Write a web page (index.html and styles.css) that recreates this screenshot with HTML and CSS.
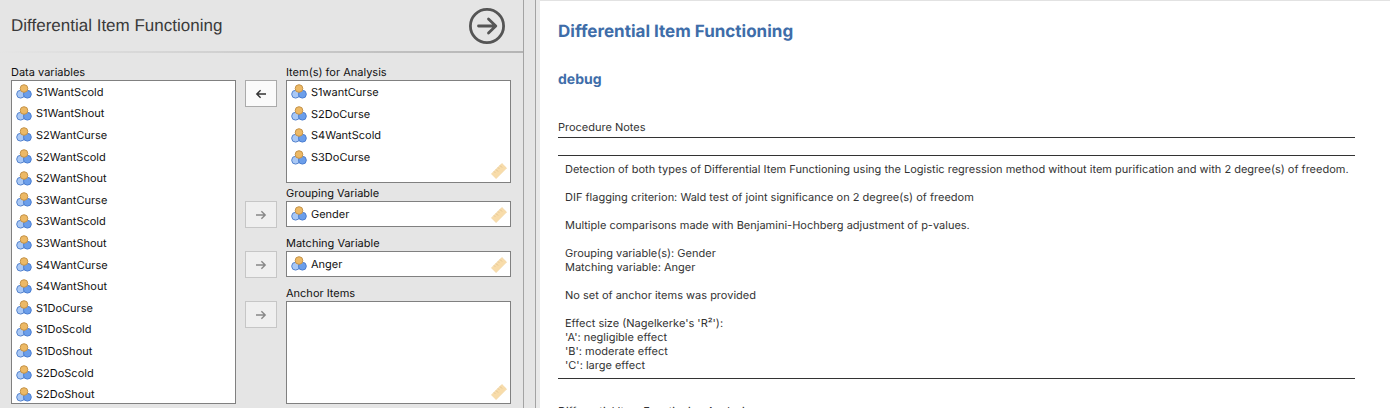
FILE: index.html
```html
<!DOCTYPE html>
<html lang="en">
<head>
<meta charset="utf-8">
<title>Differential Item Functioning</title>
<link rel="stylesheet" href="styles.css">
</head>
<body>
<svg class="defs" aria-hidden="true">
  <symbol id="nominal" viewBox="0 0 16 15">
    <circle cx="4.6" cy="10.2" r="3.9" fill="#a9c8f5" stroke="#5583cd"/>
    <circle cx="11.4" cy="10.2" r="3.9" fill="#6b9eea" stroke="#4d7fd0"/>
    <circle cx="8" cy="4.5" r="3.8" fill="#edb965" stroke="#c4934a"/>
  </symbol>
  <symbol id="ruler" viewBox="0 0 16 16">
    <path d="M10.9.5 15.5 5.1 5.1 15.5.5 10.9Z" fill="#f8dcaa" stroke="#f3d7a6" stroke-width=".8"/>
    <path d="m3 8.5 1.2 1.2M5 6.5l2 2M7 4.5l1.2 1.2M9 2.5l2 2" fill="none" stroke="#dfc08d" stroke-width=".9"/>
  </symbol>
  <symbol id="arrow-right" viewBox="0 0 12 10">
    <path d="M1 5h9M6.4 1.2 10.2 5 6.4 8.8" fill="none" stroke="currentColor" stroke-width="1.4"/>
  </symbol>
  <symbol id="arrow-left" viewBox="0 0 12 10">
    <path d="M11 5H2M5.6 1.2 1.8 5l3.8 3.8" fill="none" stroke="currentColor" stroke-width="1.4"/>
  </symbol>
</svg>
<div class="app">
  <section class="options">
    <header class="options-head">
      <h1 class="options-title">Differential Item Functioning</h1>
      <button class="run" type="button" aria-label="Hide options">
        <svg class="run-icon" viewBox="0 0 36 36"><circle cx="18" cy="18" r="16.6" fill="none" stroke="#555" stroke-width="2.8"/><path d="M9.5 18h17M19.5 11l7.3 7-7.3 7" fill="none" stroke="#555" stroke-width="2.8" stroke-linecap="round" stroke-linejoin="round"/></svg>
      </button>
    </header>
    <div class="options-body">
      <div class="source">
        <h2 class="label">Data variables</h2>
        <div class="box source-box">
          <ul class="vars source-vars">
            <li class="var"><svg class="var-icon"><use href="#nominal"/></svg>S1WantScold</li>
            <li class="var"><svg class="var-icon"><use href="#nominal"/></svg>S1WantShout</li>
            <li class="var"><svg class="var-icon"><use href="#nominal"/></svg>S2WantCurse</li>
            <li class="var"><svg class="var-icon"><use href="#nominal"/></svg>S2WantScold</li>
            <li class="var"><svg class="var-icon"><use href="#nominal"/></svg>S2WantShout</li>
            <li class="var"><svg class="var-icon"><use href="#nominal"/></svg>S3WantCurse</li>
            <li class="var"><svg class="var-icon"><use href="#nominal"/></svg>S3WantScold</li>
            <li class="var"><svg class="var-icon"><use href="#nominal"/></svg>S3WantShout</li>
            <li class="var"><svg class="var-icon"><use href="#nominal"/></svg>S4WantCurse</li>
            <li class="var"><svg class="var-icon"><use href="#nominal"/></svg>S4WantShout</li>
            <li class="var"><svg class="var-icon"><use href="#nominal"/></svg>S1DoCurse</li>
            <li class="var"><svg class="var-icon"><use href="#nominal"/></svg>S1DoScold</li>
            <li class="var"><svg class="var-icon"><use href="#nominal"/></svg>S1DoShout</li>
            <li class="var"><svg class="var-icon"><use href="#nominal"/></svg>S2DoScold</li>
            <li class="var"><svg class="var-icon"><use href="#nominal"/></svg>S2DoShout</li>
          </ul>
        </div>
      </div>
      <div class="targets">
        <div class="target target-items">
          <button class="move" type="button" aria-label="Remove from Item(s) for Analysis"><svg class="move-icon"><use href="#arrow-left"/></svg></button>
          <div class="field">
            <h2 class="label">Item(s) for Analysis</h2>
            <div class="box box-items">
              <ul class="vars items-vars">
                <li class="var"><svg class="var-icon"><use href="#nominal"/></svg>S1wantCurse</li>
                <li class="var"><svg class="var-icon"><use href="#nominal"/></svg>S2DoCurse</li>
                <li class="var"><svg class="var-icon"><use href="#nominal"/></svg>S4WantScold</li>
                <li class="var"><svg class="var-icon"><use href="#nominal"/></svg>S3DoCurse</li>
              </ul>
              <svg class="ruler"><use href="#ruler"/></svg>
            </div>
          </div>
        </div>
        <div class="target">
          <button class="move" type="button" disabled aria-label="Add to Grouping Variable"><svg class="move-icon"><use href="#arrow-right"/></svg></button>
          <div class="field">
            <h2 class="label">Grouping Variable</h2>
            <div class="box box-single">
              <ul class="vars"><li class="var"><svg class="var-icon"><use href="#nominal"/></svg>Gender</li></ul>
              <svg class="ruler"><use href="#ruler"/></svg>
            </div>
          </div>
        </div>
        <div class="target">
          <button class="move" type="button" disabled aria-label="Add to Matching Variable"><svg class="move-icon"><use href="#arrow-right"/></svg></button>
          <div class="field">
            <h2 class="label">Matching Variable</h2>
            <div class="box box-single">
              <ul class="vars"><li class="var"><svg class="var-icon"><use href="#nominal"/></svg>Anger</li></ul>
              <svg class="ruler"><use href="#ruler"/></svg>
            </div>
          </div>
        </div>
        <div class="target">
          <button class="move" type="button" disabled aria-label="Add to Anchor Items"><svg class="move-icon"><use href="#arrow-right"/></svg></button>
          <div class="field">
            <h2 class="label">Anchor Items</h2>
            <div class="box box-anchor">
              <svg class="ruler"><use href="#ruler"/></svg>
            </div>
          </div>
        </div>
      </div>
    </div>
  </section>
  <div class="splitter"></div>
  <main class="results">
    <h1 class="results-title">Differential Item Functioning</h1>
    <h2 class="results-subtitle">debug</h2>
    <table class="notes">
      <caption class="notes-caption">Procedure Notes</caption>
      <thead><tr><th class="notes-head"></th></tr></thead>
      <tbody>
        <tr><td class="notes-cell">
          <p class="note">Detection of both types of Differential Item Functioning using the Logistic regression method without item purification and with 2 degree(s) of freedom.</p>
          <p class="note">DIF flagging criterion: Wald test of joint significance on 2 degree(s) of freedom</p>
          <p class="note">Multiple comparisons made with Benjamini-Hochberg adjustment of p-values.</p>
          <p class="note">Grouping variable(s): Gender<br>Matching variable: Anger</p>
          <p class="note">No set of anchor items was provided</p>
          <p class="note">Effect size (Nagelkerke's 'R²'):<br>'A': negligible effect<br>'B': moderate effect<br>'C': large effect</p>
        </td></tr>
      </tbody>
    </table>
    <h3 class="next-caption">Differential Item Functioning Analysis</h3>
  </main>
</div>
</body>
</html>
```
FILE: styles.css
```css
* { box-sizing: border-box; }
body {
  margin: 0;
  font-family: Inter, "Liberation Sans", sans-serif;
  font-size: 11px;
  text-rendering: geometricPrecision;
  color: #111;
  background: #e5e5e5;
}
h1, h2, h3, p, ul { margin: 0; padding: 0; font-weight: 400; }
button { padding: 0; font: inherit; }
.defs { position: absolute; width: 0; height: 0; }
.app { display: flex; height: 100vh; overflow: hidden; }

.options { flex: 0 0 524px; border-right: 1px solid #a3a3a3; }
.options-head {
  display: flex;
  align-items: center;
  justify-content: space-between;
  height: 53px;
  padding: 0 18px 0 11px;
  border-bottom: 2px solid;
  border-image: linear-gradient(to right, #e5e5e5, #b4b4b4) 1;
}
.options-title {
  font-family: "Liberation Sans", Arial, sans-serif;
  font-size: 17px;
  color: #3a3a3a;
}
.run { display: flex; border: 0; background: none; }
.run-icon { width: 36px; height: 36px; }

.options-body {
  display: grid;
  grid-template-columns: 225fr 266fr;
  column-gap: 9px;
  padding: 12px 12px 0 11px;
}
.label { font-size: 11px; line-height: 15px; }
.box {
  position: relative;
  background: #fff;
  border: 1px solid #808080;
  overflow: hidden;
}
.vars { list-style: none; display: grid; grid-auto-rows: 1fr; }
.var { display: flex; align-items: center; gap: 4px; padding-left: 4px; }
.var-icon { width: 16px; height: 15px; }
.source-box { height: 324px; }
.source-vars { height: 324px; }
.box-items { height: 103px; }
.items-vars { height: 87px; }
.box-single { height: 26px; }
.box-single .var { height: 23px; }
.box-anchor { height: 103px; }
.ruler { position: absolute; right: 3px; bottom: 3px; width: 16px; height: 16px; }

.targets { display: flex; flex-direction: column; gap: 8px; }
.target { display: flex; gap: 9px; }
.target-items { margin-bottom: -5px; }
.field { flex: 1; }
.move {
  display: flex;
  align-items: center;
  justify-content: center;
  width: 32px;
  height: 27px;
  margin-top: 15px;
  border: 1px solid #aaa;
  background: #fafafa;
  color: #333;
}
.move:disabled { border-color: #c6c6c6; background: #efefef; color: #888; }
.move-icon { width: 12px; height: 10px; }

.splitter { flex: 0 0 16px; border-right: 4px solid #e9e9e9; box-shadow: inset -1px 0 #a3a3a3; }

.results {
  flex: 1;
  padding: 19px 35px 0 18px;
  border-top: 1px solid #e2e2e2;
  background: #fff;
  color: #333;
}
.results-title { font-size: 17px; line-height: 24px; font-weight: 700; color: #3e6da9; }
.results-subtitle { margin-top: 26px; font-size: 14px; line-height: 20px; font-weight: 700; color: #3e6da9; }
.notes { width: 100%; margin-top: 30px; border-collapse: collapse; border-bottom: 1px solid #333; }
.notes-caption { padding-bottom: 3px; line-height: 14px; text-align: left; }
.notes-head { height: 18px; padding: 0; border-top: 1px solid #333; border-bottom: 1px solid #333; }
.notes-cell { padding: 6px 0 6px 7px; line-height: 14px; }
.note + .note { margin-top: 14px; }
.next-caption { margin-top: 25px; font-size: 11px; line-height: 14px; }
```
